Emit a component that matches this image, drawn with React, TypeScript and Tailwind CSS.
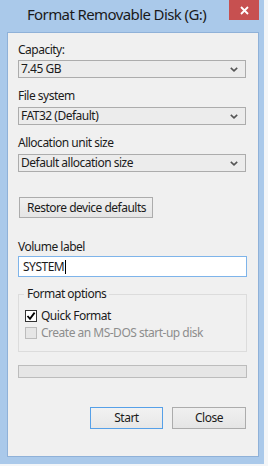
import React from "react";

const font = { fontFamily: "'Noto Sans', 'Open Sans', sans-serif" };

function Chevron() {
  return (
    <svg width="8" height="5" viewBox="0 0 8 5" className="shrink-0">
      <path d="M0.8 0.8 L4 3.8 L7.2 0.8" fill="none" stroke="#555555" strokeWidth="1.6" />
    </svg>
  );
}

function Select({ value }: { value: string }) {
  return (
    <div className="flex items-center justify-between h-[18px] ml-[10px] mr-[12px] border border-[#acacac] bg-[#ececec] pl-[2px] pr-[7px] text-[12px] leading-[16px] tracking-[-0.5px] text-[#1b1b1b]">
      <span>{value}</span>
      <Chevron />
    </div>
  );
}

function Label({ text, className }: { text: string; className?: string }) {
  return (
    <div className={`ml-[10px] text-[12px] leading-[16px] tracking-[-0.5px] text-[#1b1b1b] ${className ?? ""}`}>{text}</div>
  );
}

export default function App() {
  return (
    <div className="w-[268px] h-[466px] bg-[#f4f6f8] overflow-hidden" style={font}>
      <div className="w-[264px] h-[464px] bg-[#aac9ea] flex flex-col">
        <div className="relative h-[32px] shrink-0">
          <div className="absolute left-[2px] top-[4px] w-[229px] text-center text-[15px] leading-[20px] tracking-[-0.6px] text-[#1a1a1a] whitespace-nowrap">
            Format Removable Disk (G:)
          </div>
          <div className="absolute left-[229px] top-0 w-[30px] h-[20px] bg-[#c75050] flex items-center justify-center">
            <svg width="9" height="9" viewBox="0 0 9 9">
              <path d="M1 1 L8 8 M8 1 L1 8" stroke="#ffffff" strokeWidth="1.8" />
            </svg>
          </div>
        </div>
        <div className="ml-[7px] w-[252px] h-[425px] bg-[#f0f0f0] border border-[#8fb1d8] flex flex-col">
          <Label text="Capacity:" className="mt-[9px]" />
          <div className="mt-[2px]">
            <Select value="7.45 GB" />
          </div>
          <Label text="File system" className="mt-[10px]" />
          <div className="mt-[3px]">
            <Select value="FAT32 (Default)" />
          </div>
          <Label text="Allocation unit size" className="mt-[10px]" />
          <div className="mt-[3px]">
            <Select value="Default allocation size" />
          </div>
          <div className="mt-[25px] ml-[11px]">
            <div className="w-[134px] h-[21px] border border-[#acacac] bg-gradient-to-b from-[#f0f0f0] to-[#e5e5e5] flex items-center pl-[7px] text-[12px] leading-[16px] tracking-[-0.5px] whitespace-nowrap text-[#1b1b1b]">
              Restore device defaults
            </div>
          </div>
          <Label text="Volume label" className="mt-[21px]" />
          <div className="mt-[1px] ml-[10px] mr-[11px] h-[21px] border border-[#7eb4ea] bg-white flex items-center pl-[4px] text-[12px] leading-[16px] tracking-[-0.5px] text-[#1b1b1b]">
            SYSTEM<span className="inline-block w-[1px] h-[14px] bg-black ml-[1px]" />
          </div>
          <div className="relative mt-[17px] ml-[10px] mr-[11px] h-[58px] border border-[#dcdcdc]">
            <div className="absolute -top-[9px] left-[5px] px-[3px] bg-[#f0f0f0] text-[12px] leading-[16px] tracking-[-0.5px] text-[#1b1b1b]">
              Format options
            </div>
            <div className="flex flex-col pt-[14px] pl-[6px] gap-[3px]">
              <div className="flex items-center gap-[4px] text-[12px] leading-[14px] tracking-[-0.5px] text-[#1b1b1b]">
                <div className="w-[12px] h-[12px] border border-[#333333] bg-white flex items-center justify-center">
                  <svg width="10" height="10" viewBox="0 0 10 10">
                    <path d="M1.5 5 L4 7.8 L8.6 1.6" fill="none" stroke="#000000" strokeWidth="1.8" />
                  </svg>
                </div>
                Quick Format
              </div>
              <div className="flex items-center gap-[4px] text-[12px] leading-[14px] tracking-[-0.5px] text-[#8d8d8d]">
                <div className="w-[12px] h-[12px] border border-[#bcbcbc] bg-[#e6e6e6]" />
                Create an MS-DOS start-up disk
              </div>
            </div>
          </div>
          <div className="mt-[13px] ml-[10px] mr-[11px] h-[13px] border border-[#bcbcbc] bg-[#e6e6e6]" />
          <div className="mt-[29px] flex justify-end gap-[9px] mr-[12px]">
            <div className="w-[73px] h-[22px] border border-[#56a0e8] bg-gradient-to-b from-[#f2f2f2] to-[#e7e7e7] flex items-center justify-center text-[12px] leading-[16px] tracking-[-0.5px] text-[#1b1b1b]">
              Start
            </div>
            <div className="w-[74px] h-[22px] border border-[#acacac] bg-gradient-to-b from-[#f0f0f0] to-[#e5e5e5] flex items-center justify-center text-[12px] leading-[16px] tracking-[-0.5px] text-[#1b1b1b]">
              Close
            </div>
          </div>
        </div>
      </div>
    </div>
  );
}
